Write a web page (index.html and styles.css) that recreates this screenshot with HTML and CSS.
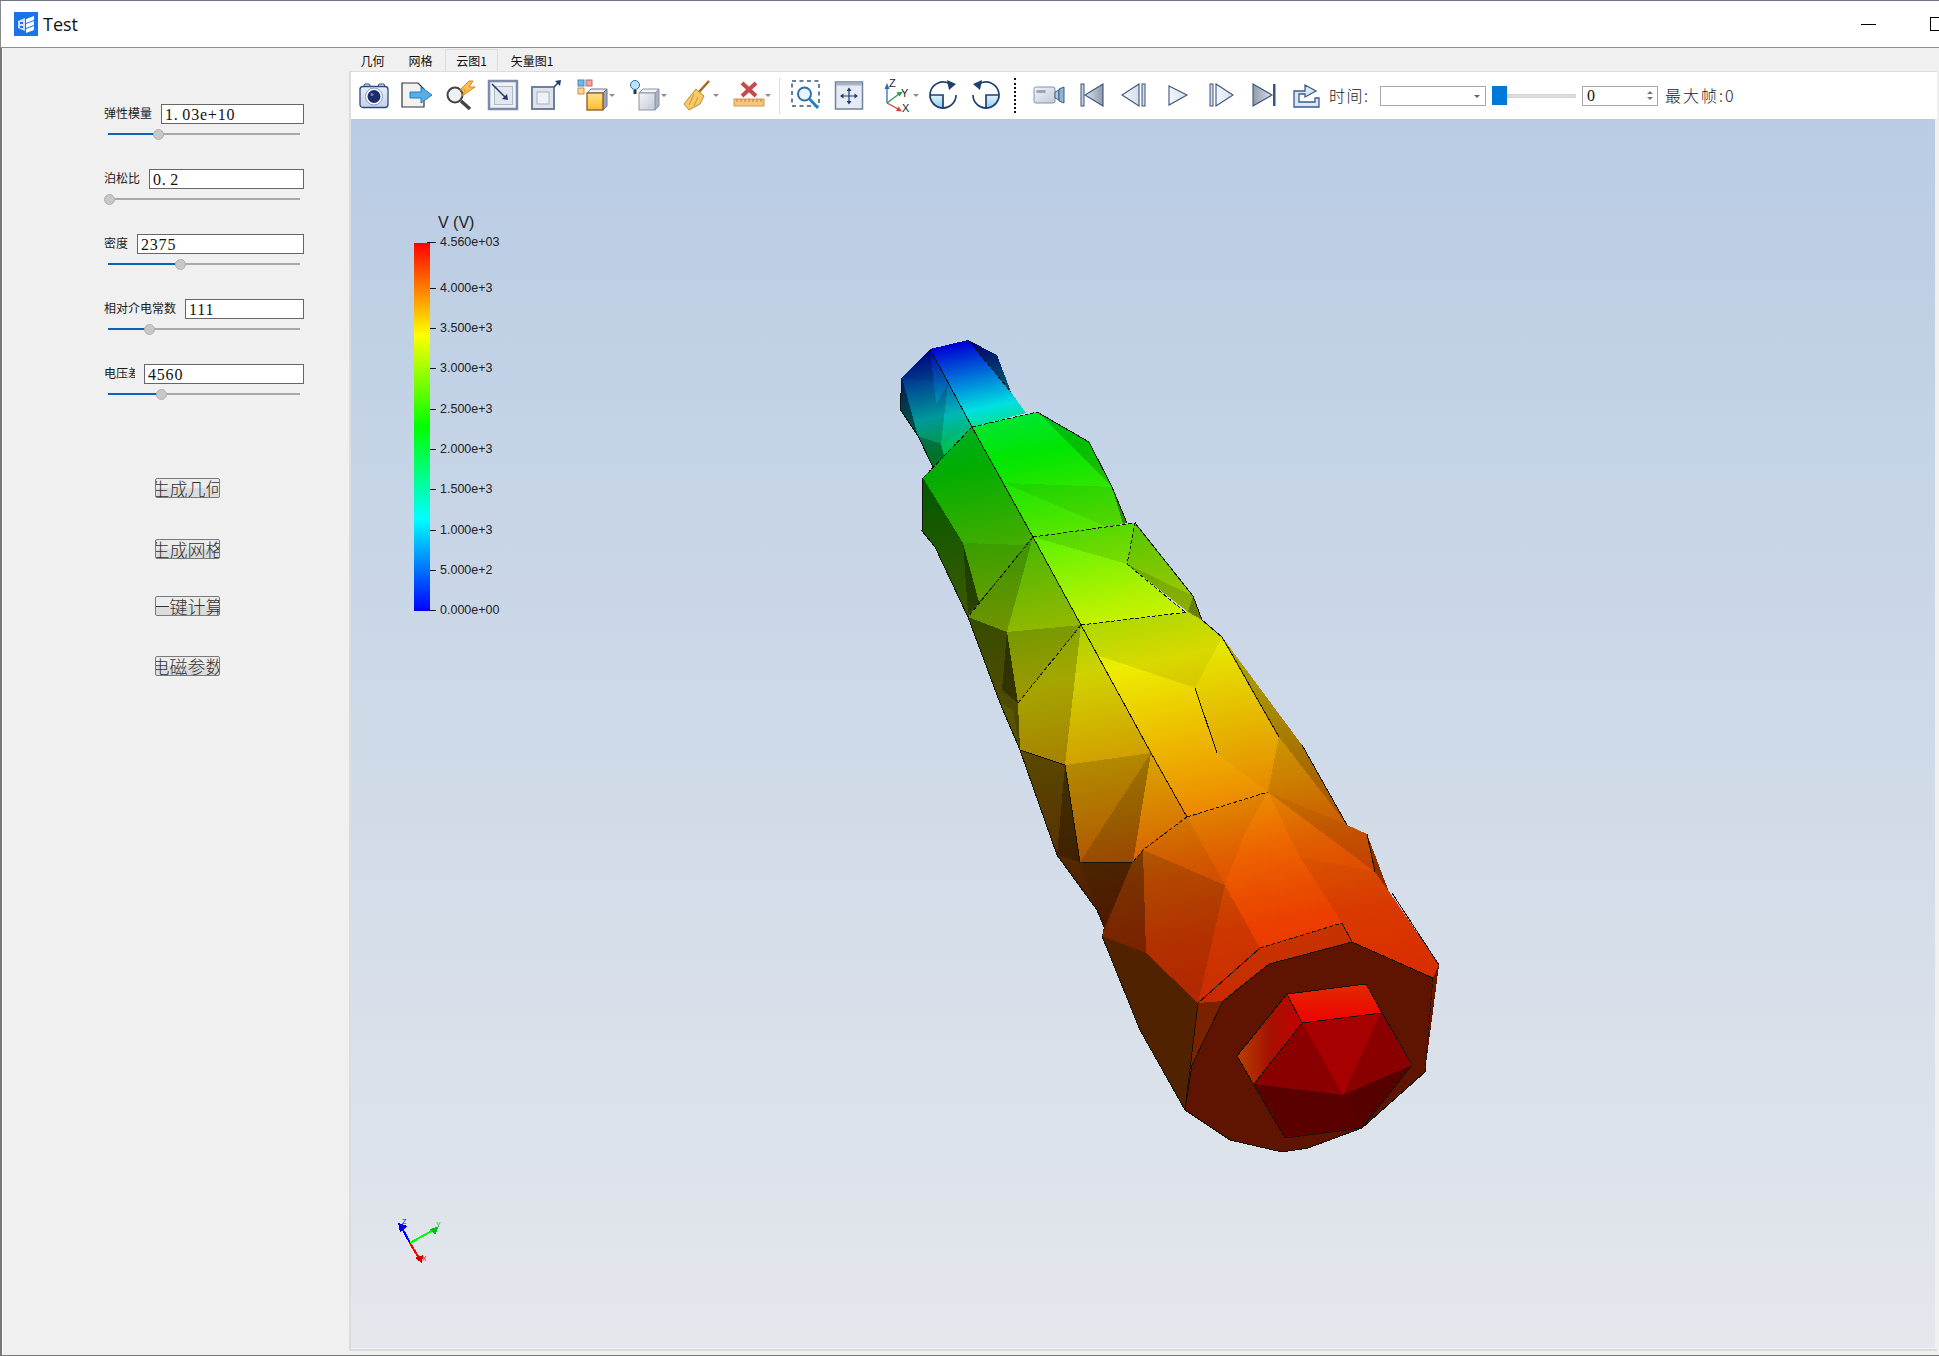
FILE: index.html
```html
<!DOCTYPE html>
<html lang="zh">
<head>
<meta charset="utf-8">
<title>Test</title>
<link rel="stylesheet" href="styles.css">
</head>
<body>
<svg class="defs" aria-hidden="true">
  <defs>
    <linearGradient id="gLight" x1="0" y1="0" x2="0" y2="1"><stop offset="0" stop-color="#e8eef7"/><stop offset="1" stop-color="#c5d3e8"/></linearGradient>
    <linearGradient id="gGrey" x1="0" y1="0" x2="1" y2="1"><stop offset="0" stop-color="#f2f4f7"/><stop offset="1" stop-color="#c3cad6"/></linearGradient>
    <linearGradient id="gTri" x1="0" y1="0" x2="1" y2="0"><stop offset="0" stop-color="#f5f7fa"/><stop offset="1" stop-color="#d7dee9"/></linearGradient>
    <linearGradient id="gDark" x1="0" y1="0" x2="1" y2="0"><stop offset="0" stop-color="#dfe3e9"/><stop offset="1" stop-color="#8e99a8"/></linearGradient>
    <linearGradient id="gDarkR" x1="1" y1="0" x2="0" y2="0"><stop offset="0" stop-color="#dfe3e9"/><stop offset="1" stop-color="#8e99a8"/></linearGradient>
    <linearGradient id="gYel" x1="0" y1="0" x2="0" y2="1"><stop offset="0" stop-color="#ffe28a"/><stop offset="1" stop-color="#fdbb2e"/></linearGradient>
    <linearGradient id="gSky" x1="0" y1="0" x2="0" y2="1"><stop offset="0" stop-color="#e4f3fc"/><stop offset="1" stop-color="#8ccbf2"/></linearGradient>
  </defs>
</svg>
<div class="window">
  <header class="titlebar">
    <svg class="logo" viewBox="0 0 24 24">
      <rect width="24" height="24" fill="#1a73e8"/>
      <path d="M4 9 L11 6 V19 L4 16Z" fill="#cfe2fb"/>
      <path d="M12 7 L20 4 V8 L12 11Z M12 12 L20 9 V13 L12 16Z M12 17 L20 14 V18 L12 21Z" fill="#fff"/>
      <path d="M6 10h3v2H6zM6 14h3v2H6z" fill="#1a73e8"/>
    </svg>
    <span class="app-name">Test</span>
    <span class="win-min"></span>
    <span class="win-max"></span>
  </header>
  <div class="main">
    <aside class="side">
      <div class="param">
        <div class="param-head"><span class="param-label">弹性模量</span><div class="edit">1<span class="pt">.</span>03e+10</div></div>
        <div class="slider"><i class="fill" style="width:50px"></i><i class="thumb"></i><i class="rest"></i></div>
      </div>
      <div class="param">
        <div class="param-head"><span class="param-label">泊松比</span><div class="edit">0<span class="pt">.</span>2</div></div>
        <div class="slider"><i class="fill" style="width:1px"></i><i class="thumb"></i><i class="rest"></i></div>
      </div>
      <div class="param">
        <div class="param-head"><span class="param-label">密度</span><div class="edit">2375</div></div>
        <div class="slider"><i class="fill" style="width:72px"></i><i class="thumb"></i><i class="rest"></i></div>
      </div>
      <div class="param">
        <div class="param-head"><span class="param-label">相对介电常数</span><div class="edit">111</div></div>
        <div class="slider"><i class="fill" style="width:41px"></i><i class="thumb"></i><i class="rest"></i></div>
      </div>
      <div class="param">
        <div class="param-head"><span class="param-label clipped">电压差</span><div class="edit">4560</div></div>
        <div class="slider"><i class="fill" style="width:53px"></i><i class="thumb"></i><i class="rest"></i></div>
      </div>
      <div class="actions">
        <button class="act act-1">生成几何</button>
        <button class="act act-2">生成网格</button>
        <button class="act act-3">一键计算</button>
        <button class="act act-4">电磁参数</button>
      </div>
    </aside>
    <section class="work">
      <nav class="tabs">
        <span class="tab t1">几何</span>
        <span class="tab t2">网格</span>
        <span class="tab t3 active">云图1</span>
        <span class="tab t4">矢量图1</span>
      </nav>
      <div class="pane">
        <div class="toolbar">
          <div class="cell"><svg class="ico" viewBox="0 0 32 32">
            <path d="M5 8l2-3h4l2 3M20 8l1-3h5l1 3" fill="#dbe4f1" stroke="#2e4a7a"/>
            <rect x="2" y="7.500" width="28" height="21" rx="3" fill="url(#gLight)" stroke="#2e4a7a" stroke-width="1.300"/>
            <circle cx="16" cy="17.500" r="8.500" fill="#fff" stroke="#7f9cc6"/>
            <circle cx="16" cy="17.500" r="6.500" fill="#1b2d6b"/>
            <circle cx="14" cy="15.500" r="1.500" fill="#6f86c0"/>
          </svg></div>
          <div class="cell"><svg class="ico" viewBox="0 0 32 32">
            <path d="M1 4H17L23 10V28H1Z" fill="#f2f2f2" stroke="#333" stroke-width="1.200"/>
            <path d="M9 13H20V8L31 16L20 24V19H9Z" fill="#55aee6" stroke="#2a7ab5"/>
          </svg></div>
          <div class="cell"><svg class="ico" viewBox="0 0 32 32">
            <circle cx="11" cy="16" r="7.500" fill="#eef2f6" stroke="#444" stroke-width="2"/>
            <path d="M17 22L26 30" stroke="#444" stroke-width="3.500"/>
            <path d="M25 2L16 11h5l-3 6L31 8h-6l4-6Z" fill="#f7c04a" stroke="#d8851b"/>
          </svg></div>
          <div class="cell"><svg class="ico" viewBox="0 0 32 32">
            <rect x="2" y="2" width="28" height="28" fill="#eef1f6" stroke="#7d8ba8" stroke-width="2.500"/>
            <rect x="7.500" y="7.500" width="18" height="18" fill="#e4e8ee" stroke="#aeb9c8"/>
            <path d="M5 5L18 18" stroke="#1f3a6e" stroke-width="1.500"/>
            <path d="M21 21L15 20L20 15Z" fill="#1f3a6e"/>
          </svg></div>
          <div class="cell"><svg class="ico" viewBox="0 0 32 32">
            <rect x="2" y="8" width="22" height="22" fill="#dfe4ec" stroke="#6d7e9e" stroke-width="2"/>
            <rect x="7" y="13" width="12" height="12" fill="#eef1f5" stroke="#a5afbf"/>
            <path d="M24 8L29 3" stroke="#1f3a6e" stroke-width="1.500"/>
            <path d="M31 1L30 7L25 2Z" fill="#1f3a6e"/>
          </svg></div>
          <div class="cell drop"><svg class="ico" viewBox="0 0 32 32">
            <rect x="1" y="1" width="6" height="6" fill="#6bb8ec" stroke="#4a85b5"/>
            <rect x="9" y="1" width="6" height="6" fill="#eda3a3" stroke="#b86a6a"/>
            <rect x="1" y="9" width="6" height="6" fill="#f7d59a" stroke="#cf923a"/>
            <path d="M10 14L14 10H30L26 14Z" fill="#eceef2" stroke="#6c778a"/>
            <path d="M26 14L30 10V27L26 31Z" fill="#9ba6b8" stroke="#6c778a"/>
            <rect x="10" y="14" width="16" height="17" fill="url(#gYel)" stroke="#8a5a2a" stroke-width="1.300"/>
          </svg><i class="caret"></i></div>
          <div class="cell drop"><svg class="ico" viewBox="0 0 32 32">
            <circle cx="6" cy="6" r="4.500" fill="#bde3fb" stroke="#2b6ca8"/>
            <rect x="4.500" y="11" width="3" height="4" fill="#333"/>
            <path d="M10 14L14 10H30L26 14Z" fill="#f0f2f5" stroke="#8c96a6"/>
            <path d="M26 14L30 10V27L26 31Z" fill="#a9b2c0" stroke="#8c96a6"/>
            <rect x="10" y="14" width="16" height="17" fill="url(#gGrey)" stroke="#8c96a6"/>
          </svg><i class="caret"></i></div>
          <div class="cell drop"><svg class="ico" viewBox="0 0 32 32">
            <path d="M28 2L18 13" stroke="#a8651f" stroke-width="2.500"/>
            <path d="M15 10L23 17L19 25L8 31L3 25Z" fill="#f6c96a" stroke="#c98628"/>
            <path d="M13 15L8 26M17 18L13 27" stroke="#c98628" stroke-width=".8"/>
          </svg><i class="caret"></i></div>
          <div class="cell drop"><svg class="ico" viewBox="0 0 32 32">
            <path d="M9 4L23 17M23 4L9 17" stroke="#c8494a" stroke-width="4"/>
            <rect x="1" y="20" width="30" height="7" fill="#f6c67e" stroke="#d39a4e"/>
            <path d="M4 20v3M8 20v3M12 20v3M16 20v3M20 20v3M24 20v3M28 20v3" stroke="#a8742c" stroke-width=".8"/>
          </svg><i class="caret"></i></div>
          <i class="sep"></i>
          <div class="cell"><svg class="ico" viewBox="0 0 32 32">
            <rect x="2" y="2" width="27" height="25" fill="none" stroke="#2f5687" stroke-width="1.500" stroke-dasharray="4 3.500"/>
            <circle cx="14.500" cy="15" r="6.500" fill="#eaf4fc" stroke="#2c6fb2" stroke-width="2"/>
            <path d="M19.500 20L28 29" stroke="#2b7fc4" stroke-width="3"/>
          </svg></div>
          <div class="cell"><svg class="ico" viewBox="0 0 32 32">
            <rect x="2.500" y="3" width="27" height="27" fill="#e6ebf3" stroke="#6f80a0" stroke-width="1.500"/>
            <rect x="3" y="3.500" width="26" height="3" fill="#a8b4c8"/>
            <path d="M16 10V24M9 17H23" stroke="#1f3a6e" stroke-width="1.200"/>
            <path d="M16 8.500l-2.500 3.500h5ZM16 25.500l-2.500-3.500h5ZM7 17l3.500-2.500v5ZM25 17l-3.500-2.500v5Z" fill="#1f3a6e"/>
          </svg></div>
          <div class="cell drop axes"><svg class="ico ico-open" viewBox="0 0 32 32">
            <path d="M6 24V8" stroke="#2b6cb5" stroke-width="1.300"/>
            <path d="M6 4l-2.500 6h5Z" fill="#2b6cb5"/>
            <path d="M6 24L18 15" stroke="#2a9a55" stroke-width="1.300"/>
            <path d="M22 12.500l-6.500 1 3 4Z" fill="#2a9a55"/>
            <path d="M6 24L17 30" stroke="#e23b3b" stroke-width="1.300"/>
            <path d="M21 32.500l-6-.5 2.500-4.500Z" fill="#e23b3b"/>
            <text class="ax-t" x="8" y="8">Z</text>
            <text class="ax-t" x="20" y="18">Y</text>
            <text class="ax-t" x="21" y="33">X</text>
          </svg><i class="caret"></i></div>
          <div class="cell"><svg class="ico" viewBox="0 0 32 32">
            <path d="M16 16H3A13 13 0 0 0 16 29Z" fill="url(#gSky)"/>
            <path d="M3 16H16V29M29 16A13 13 0 1 1 22 4.500" fill="none" stroke="#1f3f70" stroke-width="1.700"/>
            <path d="M20 1L29 5L22 11Z" fill="#1f3f70"/>
          </svg></div>
          <div class="cell"><svg class="ico mirror" viewBox="0 0 32 32">
            <path d="M16 16H3A13 13 0 0 0 16 29Z" fill="url(#gSky)"/>
            <path d="M3 16H16V29M29 16A13 13 0 1 1 22 4.500" fill="none" stroke="#1f3f70" stroke-width="1.700"/>
            <path d="M20 1L29 5L22 11Z" fill="#1f3f70"/>
          </svg></div>
          <i class="dotted"></i>
          <div class="cell"><svg class="ico" viewBox="0 0 32 32">
            <rect x="1" y="8" width="21" height="16" rx="2" fill="url(#gGrey)" stroke="#7e93b8"/>
            <rect x="3.500" y="11" width="9" height="3" fill="#9aa5b5"/>
            <path d="M22 13L26 11V21L22 19Z" fill="#b7c6d8" stroke="#3e5d8a"/>
            <path d="M26 10L31 8V24L26 22Z" fill="#8eb3d3" stroke="#3e5d8a"/>
          </svg></div>
          <div class="cell"><svg class="ico" viewBox="0 0 32 32">
            <rect x="5" y="5" width="3" height="22" fill="#c8d1de" stroke="#3a5480"/>
            <path d="M27 5L9 16L27 27Z" fill="url(#gDark)" stroke="#3a5480" stroke-width="1.100"/>
          </svg></div>
          <div class="cell"><svg class="ico" viewBox="0 0 32 32">
            <path d="M20 5L3 16L20 27Z" fill="url(#gTri)" stroke="#3a5480" stroke-width="1.100"/>
            <rect x="23" y="5" width="3" height="22" fill="#d4dbe6" stroke="#3a5480"/>
          </svg></div>
          <div class="cell"><svg class="ico" viewBox="0 0 32 32">
            <path d="M7 7L25 16L7 26Z" fill="url(#gTri)" stroke="#3a5480" stroke-width="1.100"/>
          </svg></div>
          <div class="cell"><svg class="ico" viewBox="0 0 32 32">
            <rect x="5" y="5" width="3" height="22" fill="#d4dbe6" stroke="#3a5480"/>
            <path d="M11 5L28 16L11 27Z" fill="url(#gTri)" stroke="#3a5480" stroke-width="1.100"/>
          </svg></div>
          <div class="cell"><svg class="ico" viewBox="0 0 32 32">
            <path d="M5 5L24 16L5 27Z" fill="url(#gDarkR)" stroke="#3a5480" stroke-width="1.100"/>
            <rect x="25" y="5" width="2.500" height="22" fill="#3a5480"/>
          </svg></div>
          <div class="cell"><svg class="ico" viewBox="0 0 32 32">
            <path d="M3 28V12H14V6L25 12L14 18V15H8V23H24V19H28V28Z" fill="#dbe6f5" stroke="#3a5a8c" stroke-width="1.300"/>
          </svg></div>
          <span class="tb-label time-label">时间:</span>
          <div class="combo"><i class="combo-caret"></i></div>
          <div class="frame-slider"><i class="frame-handle"></i><i class="frame-track"></i></div>
          <div class="spin"><span>0</span><i class="spin-arrows"><b class="up"></b><b class="down"></b></i></div>
          <span class="tb-label max-label">最大帧:0</span>
        </div>
        <div class="viewport">
          <svg class="scene" viewBox="351 119 1584 1229" shape-rendering="crispEdges">
            <defs>
              <linearGradient id="ramp" gradientUnits="userSpaceOnUse" x1="1000" y1="300" x2="1154" y2="1069">
                <stop offset=".044" stop-color="#0000f0"/>
                <stop offset=".131" stop-color="#00ffff"/>
                <stop offset=".175" stop-color="#00ff60"/>
              </linearGradient>
              <linearGradient id="ramp2" gradientUnits="userSpaceOnUse" x1="1000" y1="300" x2="1154" y2="1069">
                <stop offset=".14" stop-color="#00ff40"/>
                <stop offset=".2" stop-color="#00ff00"/>
                <stop offset=".4" stop-color="#b8ff00"/>
                <stop offset=".49" stop-color="#ffff00"/>
                <stop offset=".675" stop-color="#ff9c00"/>
                <stop offset=".754" stop-color="#ff6a00"/>
                <stop offset=".85" stop-color="#ff4400"/>
                <stop offset=".975" stop-color="#ff3000"/>
              </linearGradient>
              <linearGradient id="legendRamp" x1="0" y1="1" x2="0" y2="0">
                <stop offset="0" stop-color="#0000ff"/>
                <stop offset=".25" stop-color="#00ffff"/>
                <stop offset=".5" stop-color="#00ff00"/>
                <stop offset=".75" stop-color="#ffff00"/>
                <stop offset="1" stop-color="#ff0000"/>
              </linearGradient>
              <linearGradient id="capTop" x1="0" y1="0" x2="0" y2="1"><stop offset="0" stop-color="#e22a00"/><stop offset="1" stop-color="#f00000"/></linearGradient>
              <linearGradient id="capLeft" x1="0" y1="0" x2="1" y2="0"><stop offset="0" stop-color="#b84000"/><stop offset=".5" stop-color="#a41200"/><stop offset="1" stop-color="#c40000"/></linearGradient>
            </defs>

            <g class="legend">
              <text class="legend-title" x="438" y="228">V (V)</text>
              <rect x="414" y="243" width="16" height="368" fill="url(#legendRamp)"/>
              <path class="ticks" d="M427 242H436M430 288H436M430 328H436M430 368H436M430 409H436M430 449H436M430 489H436M430 530H436M430 570H436M430 610H436"/>
              <text class="legend-num" x="440" y="246">4.560e+03</text>
              <text class="legend-num" x="440" y="292">4.000e+3</text>
              <text class="legend-num" x="440" y="332">3.500e+3</text>
              <text class="legend-num" x="440" y="372">3.000e+3</text>
              <text class="legend-num" x="440" y="413">2.500e+3</text>
              <text class="legend-num" x="440" y="453">2.000e+3</text>
              <text class="legend-num" x="440" y="493">1.500e+3</text>
              <text class="legend-num" x="440" y="534">1.000e+3</text>
              <text class="legend-num" x="440" y="574">5.000e+2</text>
              <text class="legend-num" x="440" y="614">0.000e+00</text>
            </g>

            <polygon class="s35" fill="url(#ramp2)" points="972,427 923,478 922,531 935,547 968,617 1000,703 1020,750 1057,855 1097,910 1104,927 1102,936 1160,1000 1260,948 1352,942 1200,700 1100,560 1033,537"/>

            <g class="mesh-neck" fill="url(#ramp)">
              <polygon class="s45" points="968,340 997,355 1011,392"/>
              <polygon class="s88" points="930,349 968,340 1011,392 1026,413 972,427"/>
              <polygon class="s55" points="930,349 902,378 948,383"/>
              <polygon class="s60" points="902,378 918,436 948,383"/>
              <polygon class="s72" points="930,349 948,383 972,427 941,444"/>
              <polygon class="s30" points="902,378 900,409 918,436"/>
              <polygon class="s60" points="948,383 941,444 918,436"/>
              <polygon class="s45" points="918,436 941,444 944,456 933,467"/>
              <polygon class="s75" points="941,444 972,427 944,456"/>
            </g>

            <g class="mesh" fill="url(#ramp2)">
              <polygon class="s90" points="1037,412 1083,457 1112,487 1004,483 972,427"/>
              <polygon class="s75" points="1037,412 1089,442 1112,487 1083,457"/>
              <polygon class="s55" points="1112,487 1127,523 1123,524"/>
              <polygon class="s84" points="1004,483 1112,487 1123,524 1107,527"/>
              <polygon class="s90" points="1004,483 1107,527 1033,537"/>
              <polygon class="s68" points="972,427 923,478 963,543 1023,545 1033,537 1004,483"/>
              <polygon class="s62" points="963,543 1023,545 1033,537 979,602"/>
              <polygon class="s35" points="923,478 922,531 935,547 968,617 979,602 963,543"/>
              <polygon class="s25" points="963,543 979,602 968,613"/>

              <polygon class="s85" points="1033,537 1135,523 1127,564"/>
              <polygon class="s95" points="1033,537 1127,564 1185,612 1081,625"/>
              <polygon class="s78" points="1135,523 1193,596 1127,564"/>
              <polygon class="s68" points="1127,564 1193,596 1188,612"/>
              <polygon class="s50" points="1193,596 1202,620 1188,612"/>
              <polygon class="s72" points="1033,537 1081,625 1007,632"/>
              <polygon class="s58" points="1033,537 1007,632 968,617"/>

              <polygon class="s30" points="968,617 1007,632 1018,703 1013,708 1000,703"/>
              <polygon class="s20" points="1007,632 1018,703 1002,690"/>
              <polygon class="s60" points="1007,632 1081,625 1018,703"/>
              <polygon class="s65" points="1081,625 1065,765 1020,750 1018,703"/>
              <polygon class="s82" points="1081,625 1151,753 1065,765"/>
              <polygon class="s30" points="1000,703 1018,703 1020,750 1013,710"/>
              <polygon class="s35" points="1020,750 1065,765 1080,862 1057,855"/>
              <polygon class="s25" points="1065,765 1080,862 1057,855"/>
              <polygon class="s32" points="1057,855 1080,862 1104,927 1097,910"/>
              <polygon class="s30" points="1080,862 1132,863 1104,927"/>
              <polygon class="s70" points="1065,765 1151,753 1080,862"/>
              <polygon class="s60" points="1151,753 1133,862 1080,862"/>
              <polygon class="s85" points="1151,753 1187,817 1145,848 1133,862"/>

              <polygon class="s85" points="1081,625 1188,612 1202,620 1222,637 1195,688 1097,655"/>
              <polygon class="s93" points="1097,655 1195,688 1217,753 1187,817 1151,753 1081,625"/>
              <polygon class="s90" points="1222,637 1279,737 1268,792 1217,753 1195,688"/>
              <polygon class="s93" points="1217,753 1268,792 1187,817"/>
              <polygon class="s80" points="1279,737 1347,825 1268,792"/>
              <polygon class="s66" points="1222,637 1302,745 1347,825 1279,737"/>

              <polygon class="s88" points="1187,817 1268,792 1245,833 1225,885"/>
              <polygon class="s93" points="1268,792 1300,857 1225,885 1245,833"/>
              <polygon class="s88" points="1268,792 1375,872 1300,857"/>
              <polygon class="s85" points="1300,857 1375,872 1342,923"/>
              <polygon class="s76" points="1268,792 1347,825 1367,834 1375,872"/>
              <polygon class="s55" points="1367,834 1392,900 1375,872"/>
              <polygon class="s92" points="1300,857 1342,923 1260,948 1225,885"/>
              <polygon class="s82" points="1187,817 1225,885 1143,850"/>
              <polygon class="s70" points="1143,850 1225,885 1198,1003 1146,953"/>
              <polygon class="s80" points="1225,885 1260,948 1198,1003"/>
              <polygon class="s48" points="1143,850 1146,953 1102,936 1132,863"/>
              <polygon class="s85" points="1375,872 1395,900 1439,965 1433,978 1352,942 1342,923"/>
              <polygon class="s78" points="1260,948 1342,923 1352,942 1269,964"/>
              <polygon class="s78" points="1260,948 1269,964 1223,1001 1198,1003"/>
            </g>

            <g class="cap">
              <polygon fill="#502200" points="1102,936 1146,953 1198,1003 1185,1110 1140,1030"/>
              <polygon fill="#7a2200" points="1198,1003 1223,1001 1192,1065 1185,1110"/>
              <polygon fill="#5e1400" points="1269,964 1352,942 1433,978 1425,1072 1362,1128 1308,1148 1282,1152 1230,1140 1185,1110 1192,1065 1223,1001"/>
              <polygon fill="#6a1800" points="1433,978 1439,965 1425,1072"/>
              <polygon fill="url(#capTop)" points="1287,994 1366,984 1381,1013 1302,1023"/>
              <polygon fill="url(#capLeft)" points="1287,994 1302,1023 1254,1084 1237,1056"/>
              <polygon fill="#a60000" points="1302,1023 1381,1013 1343,1095"/>
              <polygon fill="#8a0000" points="1302,1023 1343,1095 1254,1084"/>
              <polygon fill="#8a0000" points="1381,1013 1412,1065 1343,1095"/>
              <polygon fill="#5a0000" points="1254,1084 1343,1095 1362,1128 1285,1138"/>
              <polygon fill="#570000" points="1343,1095 1412,1065 1362,1128"/>
            </g>

            <g class="edges">
              <path d="M930,349 L972,427 L1033,537 L1081,625 L1151,753 L1187,817"/>
              <path d="M1195,688 L1217,753"/>
              <path d="M1080,862 L1132,863"/>
              <path d="M1065,765 L1020,750 M1065,765 L1080,862"/>
              <path d="M1260,948 L1198,1003"/>
              <path d="M1342,923 L1352,942"/>
              <path d="M1269,964 L1352,942 L1433,978"/>
              <path d="M1269,964 L1223,1001 L1192,1065 L1185,1110 L1198,1003"/>
              <path d="M1287,994 L1366,984 L1412,1065 L1362,1128 L1285,1138 L1237,1056 L1287,994"/>
              <path d="M1287,994 L1302,1023 L1381,1013 M1302,1023 L1254,1084"/>
              <path d="M902,378 L900,409 L918,436 L933,467 M923,478 L922,531 L935,547 L968,617 L1000,703 L1020,750 L1057,855 L1097,910 L1104,927 M1102,936 L1140,1030 L1185,1110 L1230,1140 L1282,1152 L1308,1148 L1362,1128 L1425,1072"/>
              <path d="M1037,412 L1089,442 L1112,487 L1127,523 M1135,523 L1193,596 L1202,620 L1222,637 L1279,737 M1302,745 L1347,825 M1367,834 L1375,872 M1392,893 L1439,965"/>
            </g>
            <g class="edges dashed">
              <path d="M972,427 L1037,412"/>
              <path d="M968,340 L1011,392"/>
              <path d="M972,427 L923,478"/>
              <path d="M1033,537 L1135,523 L1127,564 L1185,612"/>
              <path d="M1033,537 L968,617"/>
              <path d="M1081,625 L1188,612"/>
              <path d="M1081,625 L1018,703"/>
              <path d="M1187,817 L1268,792"/>
              <path d="M1187,817 L1143,850 L1133,862"/>
              <path d="M1260,948 L1342,923"/>
              <path d="M1433,978 L1425,1072"/>
            </g>

            <g class="triad">
              <path class="ax-z" d="M410,1243 L402,1228"/>
              <path class="ax-y" d="M410,1243 L437,1228"/>
              <path class="ax-x" d="M410,1243 L420,1260"/>
              <polygon fill="#0000e0" points="398,1223 408,1226 400,1232"/>
              <polygon fill="#00c010" points="430,1229 439,1226 435,1235"/>
              <polygon fill="#d00000" points="415,1258 423,1255 422,1263"/>
              <text class="triad-t z" x="402" y="1224">Z</text>
              <text class="triad-t y" x="436" y="1227">Y</text>
              <text class="triad-t x" x="422" y="1261">X</text>
            </g>
          </svg>
        </div>
      </div>
    </section>
  </div>
</div>
</body>
</html>
```

FILE: styles.css
```css
* { box-sizing: border-box; }
html, body { margin: 0; padding: 0; background: #f0f0f0; }
body { width: 1939px; height: 1356px; overflow: hidden; font-family: "Noto Sans CJK SC", "Noto Sans", sans-serif; color: #1a1a1a; }
i, b { display: block; font-style: normal; }

.defs { position: absolute; width: 0; height: 0; }

.window { width: 1939px; height: 1356px; display: flex; flex-direction: column; border-bottom: 1px solid #77787c; }

.titlebar { height: 48px; flex: none; display: flex; align-items: center; background: #fff; border-top: 1px solid #6d7583; border-left: 1px solid #8a8a8f; border-bottom: 1px solid #8e8e96; padding-left: 13px; overflow: hidden; }
.logo { width: 24px; height: 24px; flex: none; }
.app-name { margin-left: 5px; font-family: "Open Sans", "Noto Sans", sans-serif; font-size: 18px; color: #111; }
.win-min { width: 15px; height: 1px; background: #000; margin-left: auto; margin-right: 54px; flex: none; }
.win-max { width: 14px; height: 14px; border: 1px solid #000; flex: none; margin-right: -5px; }

.main { flex: 1; min-height: 0; display: flex; border-left: 2px solid #77787c; }

.side { width: 347px; flex: none; padding: 56px 45px 0 101px; display: flex; flex-direction: column; gap: 25px; border-left: 1px solid #fff; }
.param { display: flex; flex-direction: column; }
.param-head { display: flex; height: 20px; align-items: center; gap: 9px; }
.param-label { font-size: 12px; line-height: 16px; white-space: nowrap; flex: none; margin-top: -2px; }
.clipped { width: 31px; overflow: hidden; }
.edit { flex: 1; height: 20px; border: 1px solid #666; background: #fff; padding-left: 3px; font-family: "Liberation Serif", serif; font-size: 16px; line-height: 20px; letter-spacing: .8px; color: #111; }
.pt { letter-spacing: 4.5px; }
.slider { height: 20px; margin: 0 4px; display: flex; align-items: center; }
.fill { height: 2px; background: #0a64b8; flex: none; }
.rest { height: 2px; background: #a9a9a9; flex: 1; }
.thumb { width: 11px; height: 11px; border-radius: 50%; background: #c8c8c8; border: 1px solid #b0b0b0; flex: none; margin: 0 -5.5px; position: relative; }

.actions { display: flex; flex-direction: column; align-items: flex-start; margin-top: 49px; margin-left: 51px; }
.act { width: 65px; height: 20px; padding: 0; border: 1px solid #7a7a7a; border-radius: 2px; background: linear-gradient(#ececec 50%, #dcdcdc 50%); font-family: "Noto Sans CJK SC", sans-serif; font-size: 18px; font-weight: 300; line-height: 18px; color: #333; overflow: hidden; white-space: nowrap; display: flex; justify-content: center; }
.act-2 { margin-top: 41px; }
.act-3 { margin-top: 37px; }
.act-4 { margin-top: 40px; }

.work { flex: 1; min-width: 0; display: flex; flex-direction: column; padding-bottom: 4px; padding-right: 2px; }
.tabs { height: 23px; flex: none; display: flex; align-items: stretch; font-size: 12px; }
.tab { display: flex; align-items: center; justify-content: center; padding-top: 1px; color: #111; }
.t1 { width: 47px; }
.t2 { width: 49px; }
.t3 { width: 53px; }
.t4 { width: 68px; }
.active { border: 1px solid #dcdcdc; border-bottom: 0; margin-top: 1px; padding-top: 0; }

.pane { flex: 1; min-height: 0; display: flex; flex-direction: column; border: 2px solid #dcdcdc; border-top-width: 1px; border-right: 0; border-bottom-width: 2px; padding-right: 2px; padding-bottom: 1px; }

.toolbar { height: 47px; flex: none; background: #fff; display: flex; align-items: center; padding-left: 1px; margin-right: -2px; }
.cell { width: 43px; height: 32px; flex: none; display: flex; align-items: center; justify-content: center; margin-top: -2px; }
.drop { width: 52px; justify-content: flex-start; padding-left: 10px; }
.axes { width: 51px; padding-left: 11px; }
.ico { width: 32px; height: 32px; flex: none; }
.ico-open { overflow: visible; }
.mirror { transform: scaleX(-1); }
.ax-t { font-family: "Liberation Sans", sans-serif; font-size: 11px; fill: #222; }
.caret { width: 0; height: 0; border-left: 3px solid transparent; border-right: 3px solid transparent; border-top: 3px solid #8a8a8a; flex: none; margin-top: 1px; }
.sep { width: 1px; height: 36px; background: #dcdcdc; margin: 0 4px; flex: none; }
.dotted { width: 2px; height: 35px; margin: 0 11px 0 7px; flex: none; border-left: 2px dotted #111; }

.tb-label { font-family: "Noto Sans CJK SC", sans-serif; font-size: 16px; font-weight: 300; line-height: 20px; color: #222; white-space: nowrap; flex: none; margin-top: -2px; }
.time-label { width: 51px; margin-left: 1px; letter-spacing: 1.500px; }
.combo { width: 106px; height: 20px; border: 1px solid #a8a8a8; background: #fff; flex: none; display: flex; align-items: center; justify-content: flex-end; padding-right: 5px; }
.combo-caret { width: 0; height: 0; border-left: 3px solid transparent; border-right: 3px solid transparent; border-top: 3px solid #666; margin-top: 2px; }
.frame-slider { width: 84px; height: 19px; margin-left: 6px; display: flex; align-items: center; flex: none; }
.frame-handle { width: 15px; height: 19px; background: #0078d7; flex: none; }
.frame-track { flex: 1; height: 4px; background: #dcdfdf; border: 1px solid #d2d5d5; }
.spin { width: 76px; height: 20px; margin-left: 6px; border: 1px solid #a8a8a8; flex: none; background: #fff; display: flex; align-items: center; justify-content: space-between; padding: 0 4px; font-family: "Liberation Serif", serif; font-size: 16px; color: #111; }
.spin-arrows { display: flex; flex-direction: column; gap: 3px; }
.up { width: 0; height: 0; border-left: 3px solid transparent; border-right: 3px solid transparent; border-bottom: 3px solid #777; }
.down { width: 0; height: 0; border-left: 3px solid transparent; border-right: 3px solid transparent; border-top: 3px solid #777; }
.max-label { margin-left: 7px; letter-spacing: 2px; }

.viewport { flex: 1; min-height: 0; background: linear-gradient(#b9cce4, #e4e7ec); overflow: hidden; }
.scene { display: block; width: 1584px; height: 1229px; }

.legend-title { font-family: "Liberation Sans", sans-serif; font-size: 16px; fill: #222; }
.legend-num { font-family: "Liberation Sans", sans-serif; font-size: 12.500px; fill: #222; }
.ticks { stroke: #111; stroke-width: 1; fill: none; }

.s20 { filter: brightness(.2); } .s25 { filter: brightness(.25); } .s30 { filter: brightness(.3); }
.s32 { filter: brightness(.32); } .s35 { filter: brightness(.35); } .s45 { filter: brightness(.45); }
.s48 { filter: brightness(.48); } .s50 { filter: brightness(.5); } .s55 { filter: brightness(.55); }
.s58 { filter: brightness(.58); } .s60 { filter: brightness(.6); } .s62 { filter: brightness(.62); }
.s65 { filter: brightness(.65); } .s66 { filter: brightness(.66); } .s68 { filter: brightness(.68); }
.s70 { filter: brightness(.7); } .s72 { filter: brightness(.72); } .s75 { filter: brightness(.75); }
.s76 { filter: brightness(.76); } .s78 { filter: brightness(.78); } .s80 { filter: brightness(.8); }
.s82 { filter: brightness(.82); } .s84 { filter: brightness(.84); } .s85 { filter: brightness(.85); }
.s88 { filter: brightness(.88); } .s90 { filter: brightness(.9); } .s92 { filter: brightness(.92); }
.s93 { filter: brightness(.93); } .s95 { filter: brightness(.95); }

.edges path { fill: none; stroke: #14140f; stroke-width: 1; }
.dashed path { stroke-dasharray: 4 2; }

.ax-z { stroke: #0000ff; stroke-width: 2; fill: none; }
.ax-y { stroke: #00ff00; stroke-width: 2; fill: none; }
.ax-x { stroke: #ff0000; stroke-width: 2; fill: none; }
.triad-t { font-family: "Liberation Sans", sans-serif; font-size: 7px; }
.triad-t.z { fill: #0000ff; }
.triad-t.y { fill: #00c000; }
.triad-t.x { fill: #e00000; }
```
